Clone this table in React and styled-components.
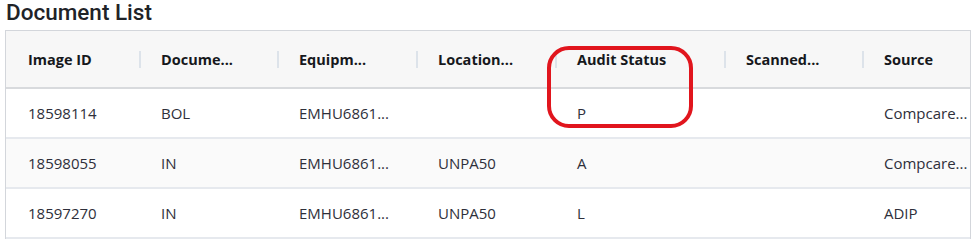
import React from 'react';
import styled, { createGlobalStyle } from 'styled-components';

const GlobalStyle = createGlobalStyle`
  html, body {
    margin: 0;
    padding: 0;
    background: #ffffff;
  }
  * {
    box-sizing: border-box;
  }
`;

const columns = [
  { key: 'imageId', title: 'Image ID', width: 133 },
  { key: 'docType', title: 'Docume...', width: 138 },
  { key: 'equipment', title: 'Equipm...', width: 139 },
  { key: 'location', title: 'Location...', width: 139 },
  { key: 'audit', title: 'Audit Status', width: 169 },
  { key: 'scanned', title: 'Scanned...', width: 138 },
  { key: 'source', title: 'Source' },
];

const rows = [
  { imageId: '18598114', docType: 'BOL', equipment: 'EMHU6861...', location: '', audit: 'P', scanned: '', source: 'Compcare...' },
  { imageId: '18598055', docType: 'IN', equipment: 'EMHU6861...', location: 'UNPA50', audit: 'A', scanned: '', source: 'Compcare...' },
  { imageId: '18597270', docType: 'IN', equipment: 'EMHU6861...', location: 'UNPA50', audit: 'L', scanned: '', source: 'ADIP' },
];

const App = () => {
  return (
    <Page>
      <GlobalStyle />
      <Title>Document List</Title>
      <TableFrame>
        <Table>
          <colgroup>
            {columns.map((c) => (
              <col key={c.key} style={c.width ? { width: c.width } : undefined} />
            ))}
          </colgroup>
          <thead>
            <tr>
              {columns.map((c, i) => (
                <HeadCell key={c.key} $divider={i > 0}>{c.title}</HeadCell>
              ))}
            </tr>
          </thead>
          <tbody>
            {rows.map((row, i) => (
              <Row key={row.imageId} $striped={i % 2 === 1}>
                {columns.map((c) => (
                  <Cell key={c.key}>{row[c.key]}</Cell>
                ))}
              </Row>
            ))}
          </tbody>
        </Table>
        <Highlight />
      </TableFrame>
    </Page>
  );
};

const Page = styled.div`
  width: 975px;
  height: 240px;
  padding: 0 4px 0 5px;
  overflow: hidden;
`;

const Title = styled.div`
  font-family: Roboto, 'Liberation Sans', sans-serif;
  font-size: 22.5px;
  font-weight: 500;
  color: #1f2328;
  height: 30px;
  line-height: 24px;
  padding-left: 1px;
`;

const TableFrame = styled.div`
  position: relative;
  width: 966px;
  border: 1px solid #d3d6db;
  border-bottom: none;
`;

const Table = styled.table`
  width: 100%;
  table-layout: fixed;
  border-collapse: collapse;
  font-family: 'Open Sans', 'Noto Sans', sans-serif;
`;

const HeadCell = styled.th`
  position: relative;
  height: 57px;
  padding: 0 8px 0 22px;
  text-align: left;
  font-size: 14.5px;
  font-weight: 700;
  color: #16181c;
  background: #f7f7f7;
  border-bottom: 2px solid #d8dadd;
  white-space: nowrap;
  overflow: hidden;

  &::before {
    content: '';
    display: ${(p) => (p.$divider ? 'block' : 'none')};
    position: absolute;
    left: 0;
    top: 20px;
    width: 2px;
    height: 17px;
    background: #dde3ea;
  }
`;

const Row = styled.tr`
  background: ${(p) => (p.$striped ? '#fafafa' : '#ffffff')};
`;

const Cell = styled.td`
  height: 50px;
  padding: 0 8px 0 22px;
  font-size: 15px;
  color: #2e2f3a;
  border-bottom: 2px solid #e6e9ee;
  white-space: nowrap;
  overflow: hidden;
`;

const Highlight = styled.div`
  position: absolute;
  left: 541px;
  top: 15px;
  width: 146px;
  height: 82px;
  border: 4px solid #e1151d;
  border-radius: 22px;
  pointer-events: none;
`;

export default App;
